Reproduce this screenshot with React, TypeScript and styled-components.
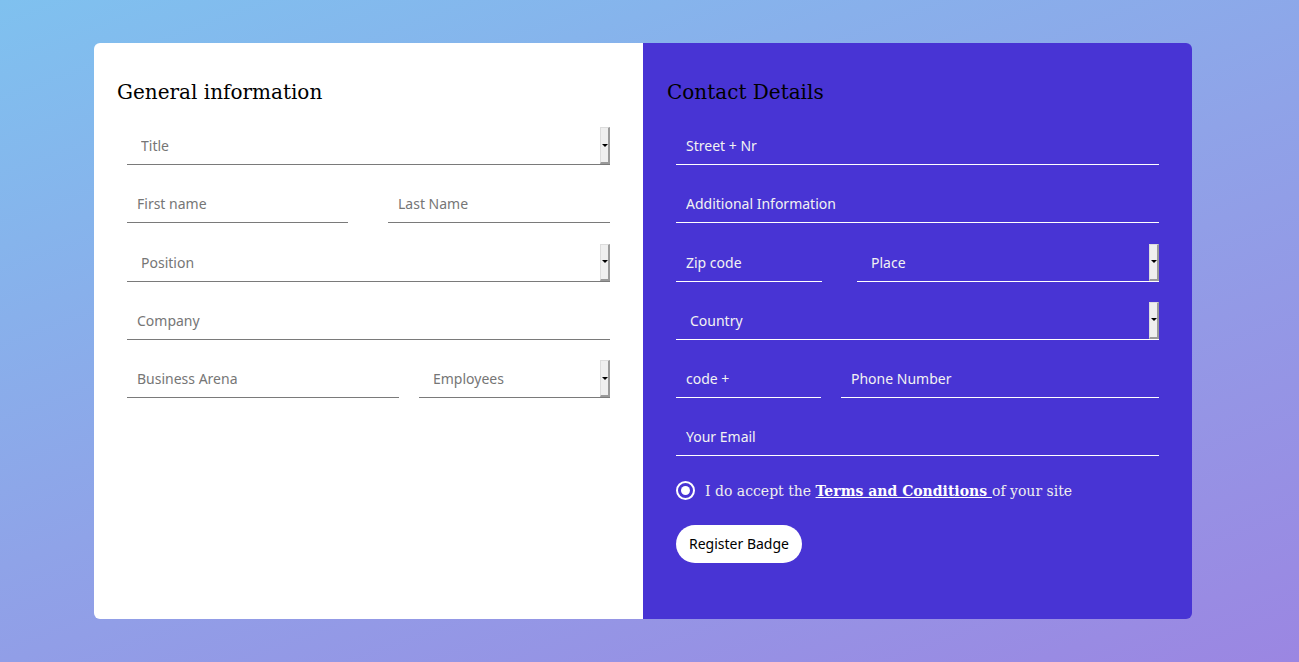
import React from "react";
import styled, { createGlobalStyle } from "styled-components";

const GlobalStyle = createGlobalStyle`
  html, body { margin: 0; padding: 0; }
  body {
    min-height: 662px;
    background: linear-gradient(160deg, #7fc1ef 0%, #8fa3e8 50%, #9b86e2 100%);
    font-family: "DejaVu Serif", serif;
  }
  * { box-sizing: border-box; }
`;

const Page = styled.div`
  padding: 43px 107px 43px 94px;
`;

const Card = styled.div`
  display: grid;
  grid-template-columns: 1fr 1fr;
  height: 576px;
  border-radius: 6px;
  overflow: hidden;
`;

const Panel = styled.section<{ $dark?: boolean }>`
  background: ${(p) => (p.$dark ? "#4834d4" : "#ffffff")};
  padding: 36px 33px 0 23px;
  display: flex;
  flex-direction: column;
`;

const Heading = styled.h2<{ $indent?: number }>`
  margin: 0 0 22px ${(p) => p.$indent ?? 0}px;
  font-family: "DejaVu Serif", serif;
  font-weight: normal;
  font-size: 20px;
  line-height: 26px;
  color: #000;
`;

const Fields = styled.div`
  margin-left: 10px;
  display: flex;
  flex-direction: column;
  gap: 20.25px;
`;

const Row = styled.div<{ $cols?: string; $gap?: number }>`
  display: grid;
  grid-template-columns: ${(p) => p.$cols || "1fr"};
  column-gap: ${(p) => p.$gap ?? 0}px;
`;

const Field = styled.div<{ $dark?: boolean }>`
  display: flex;
  align-items: stretch;
  height: 38px;
  border-bottom: 1px solid ${(p) => (p.$dark ? "#ffffff" : "#7a7a7a")};
`;

const Input = styled.input<{ $dark?: boolean }>`
  flex: 1;
  min-width: 0;
  border: none;
  outline: none;
  background: transparent;
  padding: 0 10px;
  font-family: "Noto Sans", "Open Sans", sans-serif;
  font-size: 14px;
  color: ${(p) => (p.$dark ? "#ffffff" : "#333")};
  &::placeholder {
    color: ${(p) => (p.$dark ? "#f2f2f2" : "#767676")};
    opacity: 1;
  }
`;

const Select = styled.select<{ $dark?: boolean }>`
  flex: 1;
  min-width: 0;
  appearance: none;
  -webkit-appearance: none;
  border: none;
  outline: none;
  background: transparent;
  padding: 0 14px;
  font-family: "Noto Sans", "Open Sans", sans-serif;
  font-size: 14px;
  color: ${(p) => (p.$dark ? "#f2f2f2" : "#767676")};
`;

const ArrowBox = styled.span`
  width: 10px;
  flex: none;
  background: #efefef;
  border-top: 1px solid #dcdcdc;
  border-left: 1px solid #dcdcdc;
  border-right: 2px solid #9a9a9a;
  border-bottom: 2px solid #9a9a9a;
  display: flex;
  align-items: center;
  justify-content: center;
  &::after {
    content: "";
    width: 0;
    height: 0;
    border-left: 3px solid transparent;
    border-right: 3px solid transparent;
    border-top: 3px solid #000;
  }
`;

const Terms = styled.label`
  display: flex;
  align-items: center;
  gap: 10px;
  height: 28px;
  font-family: "DejaVu Serif", serif;
  font-size: 14px;
  color: #eeeeee;
`;

const Radio = styled.span`
  width: 19px;
  height: 19px;
  border: 2px solid #fff;
  border-radius: 50%;
  display: flex;
  align-items: center;
  justify-content: center;
  flex: none;
  &::after {
    content: "";
    width: 9px;
    height: 9px;
    border-radius: 50%;
    background: #fff;
  }
`;

const TermsLink = styled.a`
  color: #fff;
  font-weight: bold;
  text-decoration: underline;
  white-space: pre;
`;

const Button = styled.button`
  align-self: flex-start;
  width: 126px;
  height: 38px;
  border: none;
  border-radius: 19px;
  background: #fff;
  color: #000;
  font-family: "Noto Sans", "Open Sans", sans-serif;
  font-size: 14px;
  cursor: pointer;
`;

const TextField = ({ ph, dark }: { ph: string; dark?: boolean }) => (
  <Field $dark={dark}>
    <Input placeholder={ph} $dark={dark} />
  </Field>
);

const SelectField = ({ ph, dark }: { ph: string; dark?: boolean }) => (
  <Field $dark={dark}>
    <Select defaultValue="" $dark={dark}>
      <option value="" disabled hidden>
        {ph}
      </option>
    </Select>
    <ArrowBox />
  </Field>
);

export default function App() {
  return (
    <>
      <GlobalStyle />
      <Page>
        <Card>
          <Panel>
            <Heading>General information</Heading>
            <Fields>
              <SelectField ph="Title" />
              <Row $cols="221px 1fr" $gap={40}>
                <TextField ph="First name" />
                <TextField ph="Last Name" />
              </Row>
              <SelectField ph="Position" />
              <TextField ph="Company" />
              <Row $cols="272px 1fr" $gap={20}>
                <TextField ph="Business Arena" />
                <SelectField ph="Employees" />
              </Row>
            </Fields>
          </Panel>
          <Panel $dark>
            <Heading $indent={1}>Contact Details</Heading>
            <Fields>
              <TextField ph="Street + Nr" dark />
              <TextField ph="Additional Information" dark />
              <Row $cols="146px 1fr" $gap={35}>
                <TextField ph="Zip code" dark />
                <SelectField ph="Place" dark />
              </Row>
              <SelectField ph="Country" dark />
              <Row $cols="145px 1fr" $gap={20}>
                <TextField ph="code +" dark />
                <TextField ph="Phone Number" dark />
              </Row>
              <TextField ph="Your Email" dark />
              <Terms>
                <Radio />
                <span>
                  I do accept the <TermsLink href="#">Terms and Conditions </TermsLink>
                  of your site
                </span>
              </Terms>
              <Button>Register Badge</Button>
            </Fields>
          </Panel>
        </Card>
      </Page>
    </>
  );
}
